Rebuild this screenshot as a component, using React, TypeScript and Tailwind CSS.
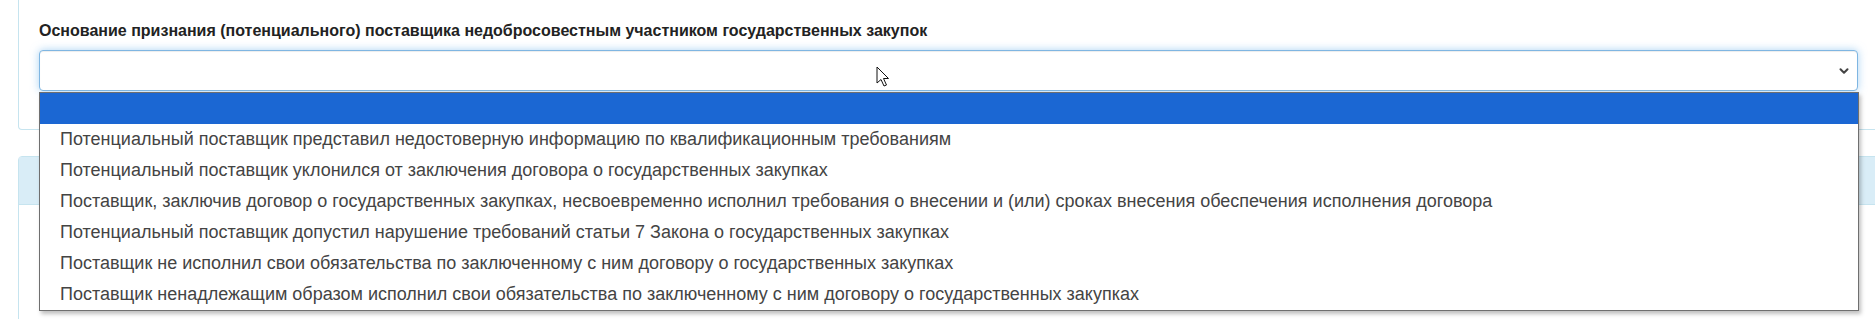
import { ChevronDown } from "lucide-react";

const options = [
  "",
  "Потенциальный поставщик представил недостоверную информацию по квалификационным требованиям",
  "Потенциальный поставщик уклонился от заключения договора о государственных закупках",
  "Поставщик, заключив договор о государственных закупках, несвоевременно исполнил требования о внесении и (или) сроках внесения обеспечения исполнения договора",
  "Потенциальный поставщик допустил нарушение требований статьи 7 Закона о государственных закупках",
  "Поставщик не исполнил свои обязательства по заключенному с ним договору о государственных закупках",
  "Поставщик ненадлежащим образом исполнил свои обязательства по заключенному с ним договору о государственных закупках",
];

const Cursor = () => (
  <svg className="absolute left-[876px] top-[66px] z-40" width="14" height="22" viewBox="0 0 14 22">
    <path d="M1 1 L1 17 L5 13.5 L8 20 L10.5 19 L7.5 12.5 L12.5 12.5 Z" fill="#fff" stroke="#111" strokeWidth="1" strokeLinejoin="miter" />
  </svg>
);

const Dropdown = () => {
  return (
    <div className="absolute left-[39px] top-[92px] z-30 w-[1820px] border border-[#6f6f6f] bg-white shadow-[2px_3px_4px_rgba(0,0,0,0.25)]">
      {options.map((opt, i) => (
        <div
          key={i}
          className={`flex h-[31px] items-center whitespace-nowrap pl-[20px] text-[18px] text-[#444] ${i === 0 ? "bg-[#1b67d3]" : ""}`}
        >
          {opt}
        </div>
      ))}
    </div>
  );
};

export default function App() {
  return (
    <div className="relative h-[319px] w-full overflow-hidden bg-white font-['Liberation_Sans',Arial,sans-serif]">
      <div className="w-[1900px] pl-[18px]">
        <div className="w-[1861px] rounded-b-[4px] border-x border-b border-[#c6e4ef] bg-white px-[20px] pt-[21px] pb-[38px]">
          <label className="block text-[16px] font-bold leading-[20px] text-[#222]">
            Основание признания (потенциального) поставщика недобросовестным участником государственных закупок
          </label>
          <div className="mt-[9px] flex h-[41px] items-center justify-end rounded-[4px] border border-[#7fb6e2] bg-white pr-[6px] shadow-[0_0_8px_rgba(102,175,233,0.55),inset_0_1px_1px_rgba(0,0,0,0.075)]">
            <ChevronDown className="h-[14px] w-[14px] text-[#444]" strokeWidth={3.5} />
          </div>
        </div>

        <div className="mt-[26px] h-[200px] w-[1861px] rounded-t-[4px] border border-[#c6e4ef] bg-white">
          <div className="h-[48px] border-b border-[#c6e4ef] bg-[#d9edf7]" />
        </div>
      </div>

      <Dropdown />
      <Cursor />
    </div>
  );
}
